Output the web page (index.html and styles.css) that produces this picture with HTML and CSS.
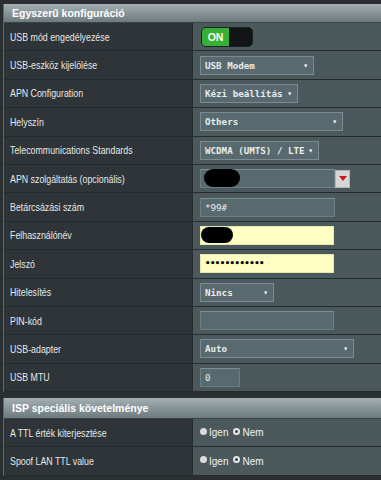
FILE: index.html
```html
<!DOCTYPE html>
<html lang="hu">
<head>
    <meta charset="UTF-8">
    <meta name="viewport" content="width=device-width, initial-scale=1.0">
    <title>USB beállítások</title>
    <link rel="stylesheet" href="styles.css">
</head>
<body>
    <div class="panel">
        <div class="section-title">Egyszerű konfiguráció</div>
        <div class="row">
            <div class="label"><span>USB mód engedélyezése</span></div>
            <div class="field">
                <div class="switch"><span class="switch-on">ON</span><span class="switch-knob"></span></div>
            </div>
        </div>
        <div class="row">
            <div class="label"><span>USB-eszköz kijelölése</span></div>
            <div class="field"><div class="select w-114">USB Modem<span class="caret">&#9662;</span></div></div>
        </div>
        <div class="row">
            <div class="label"><span>APN Configuration</span></div>
            <div class="field"><div class="select w-98">Kézi beállítás<span class="caret">&#9662;</span></div></div>
        </div>
        <div class="row">
            <div class="label"><span>Helyszín</span></div>
            <div class="field"><div class="select w-143">Others<span class="caret">&#9662;</span></div></div>
        </div>
        <div class="row">
            <div class="label"><span>Telecommunications Standards</span></div>
            <div class="field"><div class="select w-119">WCDMA (UMTS) / LTE<span class="caret">&#9662;</span></div></div>
        </div>
        <div class="row">
            <div class="label"><span>APN szolgáltatás (opcionális)</span></div>
            <div class="field">
                <div class="input w-135"><span class="blob blob-apn"></span></div>
                <div class="drop-btn"><span class="red-arrow"></span></div>
            </div>
        </div>
        <div class="row">
            <div class="label"><span>Betárcsázási szám</span></div>
            <div class="field"><div class="input w-135">*99#</div></div>
        </div>
        <div class="row">
            <div class="label"><span>Felhasználónév</span></div>
            <div class="field"><div class="input filled w-134"><span class="blob blob-user"></span></div></div>
        </div>
        <div class="row">
            <div class="label"><span>Jelszó</span></div>
            <div class="field"><div class="input filled w-134 dots">••••••••••••</div></div>
        </div>
        <div class="row">
            <div class="label"><span>Hitelesítés</span></div>
            <div class="field"><div class="select w-74">Nincs<span class="caret">&#9662;</span></div></div>
        </div>
        <div class="row">
            <div class="label"><span>PIN-kód</span></div>
            <div class="field"><div class="input w-134"></div></div>
        </div>
        <div class="row">
            <div class="label"><span>USB-adapter</span></div>
            <div class="field"><div class="select w-154">Auto<span class="caret">&#9662;</span></div></div>
        </div>
        <div class="row">
            <div class="label"><span>USB MTU</span></div>
            <div class="field"><div class="input w-40">0</div></div>
        </div>
    </div>

    <div class="panel second">
        <div class="section-title tall">ISP speciális követelménye</div>
        <div class="row">
            <div class="label"><span>A TTL érték kiterjesztése</span></div>
            <div class="field">
                <label class="radio"><span class="dot"></span>Igen</label>
                <label class="radio"><span class="dot checked"></span>Nem</label>
            </div>
        </div>
        <div class="row">
            <div class="label"><span>Spoof LAN TTL value</span></div>
            <div class="field">
                <label class="radio"><span class="dot"></span>Igen</label>
                <label class="radio"><span class="dot checked"></span>Nem</label>
            </div>
        </div>
    </div>
</body>
</html>
```

FILE: styles.css
```css
body {
    margin: 0;
    padding: 4px 0 0 3px;
    background-color: #2a2f31;
    font-family: "Liberation Sans", Arial, sans-serif;
    font-size: 10.5px;
    color: #e6e8e8;
}

.panel {
    border-left: 1px solid #5d6a6d;
}

.panel.second {
    margin-top: 6px;
}

.section-title {
    height: 18px;
    line-height: 18px;
    padding-left: 8px;
    font-weight: bold;
    font-size: 10.5px;
    color: #ffffff;
    background-image: linear-gradient(#a3afb2, #6d7a7e);
    border-bottom: 1px solid #394245;
}

.section-title.tall {
    height: 20px;
    line-height: 20px;
}

.row {
    display: flex;
    height: 28.4px;
    box-sizing: border-box;
    border-bottom: 1px solid #252b2d;
}

.label {
    width: 189px;
    box-sizing: border-box;
    flex-shrink: 0;
    padding-left: 6px;
    display: flex;
    align-items: center;
    background-color: #2e3437;
    border-right: 1px solid #262c2e;
    white-space: nowrap;
}

/* the router font is narrower than Arial */
.label span {
    display: inline-block;
    transform: scaleX(0.84);
    transform-origin: left center;
}

.field {
    flex: 1;
    display: flex;
    align-items: center;
    padding-left: 7px;
    background-color: #4b595d;
}

/* toggle */
.switch {
    display: flex;
    width: 52px;
    height: 20px;
    margin-left: 1px;
    border-radius: 5px;
    overflow: hidden;
    background-color: #0e1112;
    border: 1px solid #1c2224;
    box-sizing: border-box;
}

.switch-on {
    width: 27px;
    background-color: #35b236;
    color: #fff;
    font-weight: bold;
    font-size: 10.5px;
    line-height: 18px;
    text-align: center;
}

.switch-knob {
    flex: 1;
    border-radius: 5px;
    background-color: #111516;
}

/* selects and inputs */
.select,
.input {
    position: relative;
    height: 19px;
    line-height: 17px;
    box-sizing: border-box;
    padding-left: 4px;
    font-family: "DejaVu Sans Mono", "Liberation Mono", monospace;
    font-size: 9.2px;
    font-weight: bold;
    color: #e9eded;
    background-color: #586a6f;
    border: 1px solid #7b8b8f;
}

.input {
    background-color: #566a6f;
    border-color: #6c7e82;
    border-top-color: #7f9094;
    font-weight: normal;
}

.input.filled {
    background-color: #ffffc4;
    border-color: #e8e8b0;
    color: #000;
}

.dots {
    letter-spacing: -0.5px;
    font-size: 9px;
    font-weight: bold;
}

.caret {
    position: absolute;
    right: 5px;
    top: 0;
    font-size: 8px;
    color: #fff;
}

.w-40 { width: 40px; }
.w-74 { width: 74px; }
.w-98 { width: 98px; }
.w-114 { width: 114px; }
.w-119 { width: 119px; }
.w-134 { width: 134px; }
.w-135 { width: 135px; }
.w-143 { width: 143px; }
.w-154 { width: 154px; }

.blob {
    position: absolute;
    background-color: #000;
    border-radius: 9px;
}

.blob-apn {
    left: 3px;
    top: -1px;
    width: 36px;
    height: 18px;
}

.blob-user {
    left: 0;
    top: 0;
    width: 32px;
    height: 16px;
}

.drop-btn {
    width: 15px;
    height: 18px;
    background-color: #d6d6d6;
    border: 1px solid #b5b5b5;
    box-sizing: border-box;
    display: flex;
    align-items: center;
    justify-content: center;
}

.red-arrow {
    width: 0;
    height: 0;
    border-left: 4px solid transparent;
    border-right: 4px solid transparent;
    border-top: 5px solid #d0141a;
}

/* radios */
.radio {
    display: flex;
    align-items: center;
    margin-right: 5px;
    color: #f0f2f2;
    font-size: 10px;
}

.dot {
    width: 7px;
    height: 7px;
    border-radius: 50%;
    background-color: #dcdcdc;
    margin-right: 2px;
    margin-top: -3px;
}

.dot.checked {
    width: 3px;
    height: 3px;
    background-color: #3a4548;
    border: 2px solid #e8e8e8;
}
```
